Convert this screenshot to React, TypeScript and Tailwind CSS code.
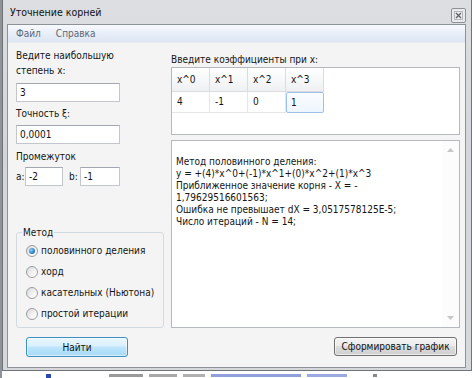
import React from "react";

function TextInput({ value, className = "" }: { value: string; className?: string }) {
  return (
    <div
      className={
        "h-[19px] border border-[#c3c6cd] border-t-[#a3a7b0] bg-white pl-[3px] leading-[17px] text-[#111] " +
        className
      }
    >
      {value}
    </div>
  );
}

function Radio({ checked, label }: { checked?: boolean; label: string }) {
  return (
    <div className="flex h-[21px] items-center pl-[9px]">
      <span className="flex h-[12px] w-[12px] items-center justify-center rounded-full border border-[#9a9c9e] bg-[linear-gradient(135deg,#d8d9db_0%,#f4f4f4_60%,#ffffff_100%)]">
        {checked && (
          <span className="h-[6px] w-[6px] rounded-full bg-[radial-gradient(circle_at_35%_35%,#8fd0f7_0%,#2a7fc8_60%,#1b4f8f_100%)]" />
        )}
      </span>
      <span className="ml-[3px]">{label}</span>
    </div>
  );
}

function CloseIcon() {
  return (
    <svg width="15" height="15" viewBox="0 0 15 15">
      <rect x="0.5" y="0.5" width="14" height="14" rx="1.5" fill="#e9eaec" stroke="#8d9096" />
      <rect x="3.5" y="3.5" width="8" height="8" fill="none" stroke="#b4b7bc" />
      <path d="M5 5 L10 10 M10 5 L5 10" stroke="#5b5f66" strokeWidth="1.2" />
    </svg>
  );
}

export default function App() {
  const headers = ["x^0", "x^1", "x^2", "x^3"];
  const values = ["4", "-1", "0", "1"];
  const output =
    "\nМетод половинного деления:\ny = +(4)*x^0+(-1)*x^1+(0)*x^2+(1)*x^3\nПриближенное значение корня - X = -\n1,79629516601563;\nОшибка не превышает dX = 3,0517578125E-5;\nЧисло итераций - N = 14;";

  return (
    <div className="flex h-[378px] w-[474px] flex-col overflow-hidden border-l-2 border-[#8f9296] bg-white font-['DejaVu_Sans_Condensed','DejaVu_Sans',sans-serif] font-stretch-condensed text-[10px] text-[#151515]">
      {/* window */}
      <div className="flex h-[371px] w-[470px] flex-col border-x border-b border-[#6f747b] bg-[linear-gradient(to_bottom,#dcdee1_0%,#d3d6da_40%,#d6d8dc_100%)] pl-[4px] pr-[5px]">
        {/* title bar */}
        <div className="flex h-[24px] items-center justify-between">
          <span className="pl-[3px] pt-[1px] text-[10.5px] text-[#111]">Уточнение корней</span>
          <span className="mt-[6px]">
            <CloseIcon />
          </span>
        </div>
        {/* client area */}
        <div className="flex h-[344px] flex-col border border-[#8d9299] bg-[#f4f4f4]">
          {/* menu */}
          <div className="flex h-[18px] items-center border-b border-[#e6ebf3] bg-[linear-gradient(to_bottom,#f7f9fc_0%,#e9eff8_50%,#dce5f2_100%)] pl-[8px] text-[#5e6772]">
            <span>Файл</span>
            <span className="ml-[15px]">Справка</span>
          </div>
          {/* content */}
          <div className="flex flex-1 pl-[8px]">
            {/* left column */}
            <div className="flex w-[148px] flex-col pt-[5px]">
              <div className="leading-[15px]">
                Ведите наибольшую
                <br />
                степень x:
              </div>
              <TextInput value="3" className="mt-[5px] w-[104px]" />
              <div className="mt-[4px] leading-[15px]">Точность ξ:</div>
              <TextInput value="0,0001" className="mt-[4px] w-[104px]" />
              <div className="mt-[5px] leading-[15px]">Промежуток</div>
              <div className="mt-[3px] flex h-[19px] items-center">
                <span className="w-[9px]">a:</span>
                <TextInput value="-2" className="w-[38px]" />
                <span className="ml-[6px] w-[11px]">b:</span>
                <TextInput value="-1" className="w-[40px]" />
              </div>
              <fieldset className="mt-[39px] rounded-[3px] border border-[#d3dbe2] pb-[3px]">
                <legend className="ml-[5px] px-[1px] leading-[15px]">Метод</legend>
                <Radio checked label="половинного деления" />
                <Radio label="хорд" />
                <Radio label="касательных (Ньютона)" />
                <Radio label="простой итерации" />
              </fieldset>
              <button className="ml-[10px] mt-[9px] h-[20px] w-[102px] rounded-[3px] border border-[#3c8fc4] bg-[linear-gradient(to_bottom,#eaf6fd_0%,#d9f0fc_45%,#bee6fd_50%,#a7d9f5_100%)] text-[10px] text-[#111] shadow-[inset_0_0_0_1px_rgba(255,255,255,0.55)]">
                Найти
              </button>
            </div>
            {/* right column */}
            <div className="ml-[7px] flex w-[289px] flex-col pt-[9px]">
              <div className="leading-[15px]">Введите коэффициенты при x:</div>
              <div className="h-[68px] border border-[#b5b8bd] bg-white">
                <div className="flex h-[24px]">
                  {headers.map((h) => (
                    <div
                      key={h}
                      className="w-[38px] border-b border-r border-[#dadce0] bg-[linear-gradient(to_bottom,#ffffff_0%,#f7f8f9_50%,#eef0f2_100%)] pl-[5px] leading-[23px]"
                    >
                      {h}
                    </div>
                  ))}
                </div>
                <div className="flex h-[21px]">
                  {values.map((v, i) =>
                    i === 3 ? (
                      <div
                        key={i}
                        className="w-[38px] rounded-[2px] border border-[#9dc1e9] bg-[linear-gradient(to_bottom,#fbfdff_0%,#eef5fd_100%)] pl-[4px] leading-[19px]"
                      >
                        {v}
                      </div>
                    ) : (
                      <div key={i} className="w-[38px] border-b border-r border-[#e4e6e9] pl-[5px] leading-[20px]">
                        {v}
                      </div>
                    )
                  )}
                </div>
              </div>
              <div className="mt-[5px] flex h-[188px] border border-[#b5b8bd] bg-white">
                <div className="flex-1 whitespace-pre-line pl-[4px] pt-[3px] leading-[12px]">{output}</div>
                <div className="flex w-[17px] flex-col items-center justify-between bg-[#fcfcfc] py-[7px]">
                  <svg width="7" height="4" viewBox="0 0 7 4">
                    <path d="M0 4 L3.5 0 L7 4 Z" fill="#c4c6c9" />
                  </svg>
                  <svg width="7" height="4" viewBox="0 0 7 4">
                    <path d="M0 0 L3.5 4 L7 0 Z" fill="#c4c6c9" />
                  </svg>
                </div>
              </div>
              <div className="mt-[9px] flex justify-end pr-[3px]">
                <button className="h-[19px] w-[123px] rounded-[3px] border border-[#707070] bg-[linear-gradient(to_bottom,#f4f4f4_0%,#ebebeb_45%,#dddddd_50%,#cfcfcf_100%)] text-[10px] text-[#111] shadow-[inset_0_0_0_1px_rgba(255,255,255,0.6)]">
                  Сформировать график
                </button>
              </div>
            </div>
          </div>
        </div>
      </div>
      {/* desktop strip below */}
      <div className="flex h-[7px] items-start gap-[6px] pl-[44px] pt-[3px]">
        <span className="h-[4px] w-[5px] bg-[#2a49b0]" />
        <span className="ml-[52px] h-[3px] w-[34px] bg-[#9a9a9a]" />
        <span className="h-[3px] w-[28px] bg-[#a8a8a8]" />
        <span className="h-[3px] w-[22px] bg-[#b0b0b0]" />
        <span className="h-[3px] w-[90px] bg-[#8fa0dc]" />
        <span className="h-[3px] w-[40px] bg-[#9aabe0]" />
        <span className="ml-[20px] h-[3px] w-[4px] bg-[#888]" />
      </div>
    </div>
  );
}
